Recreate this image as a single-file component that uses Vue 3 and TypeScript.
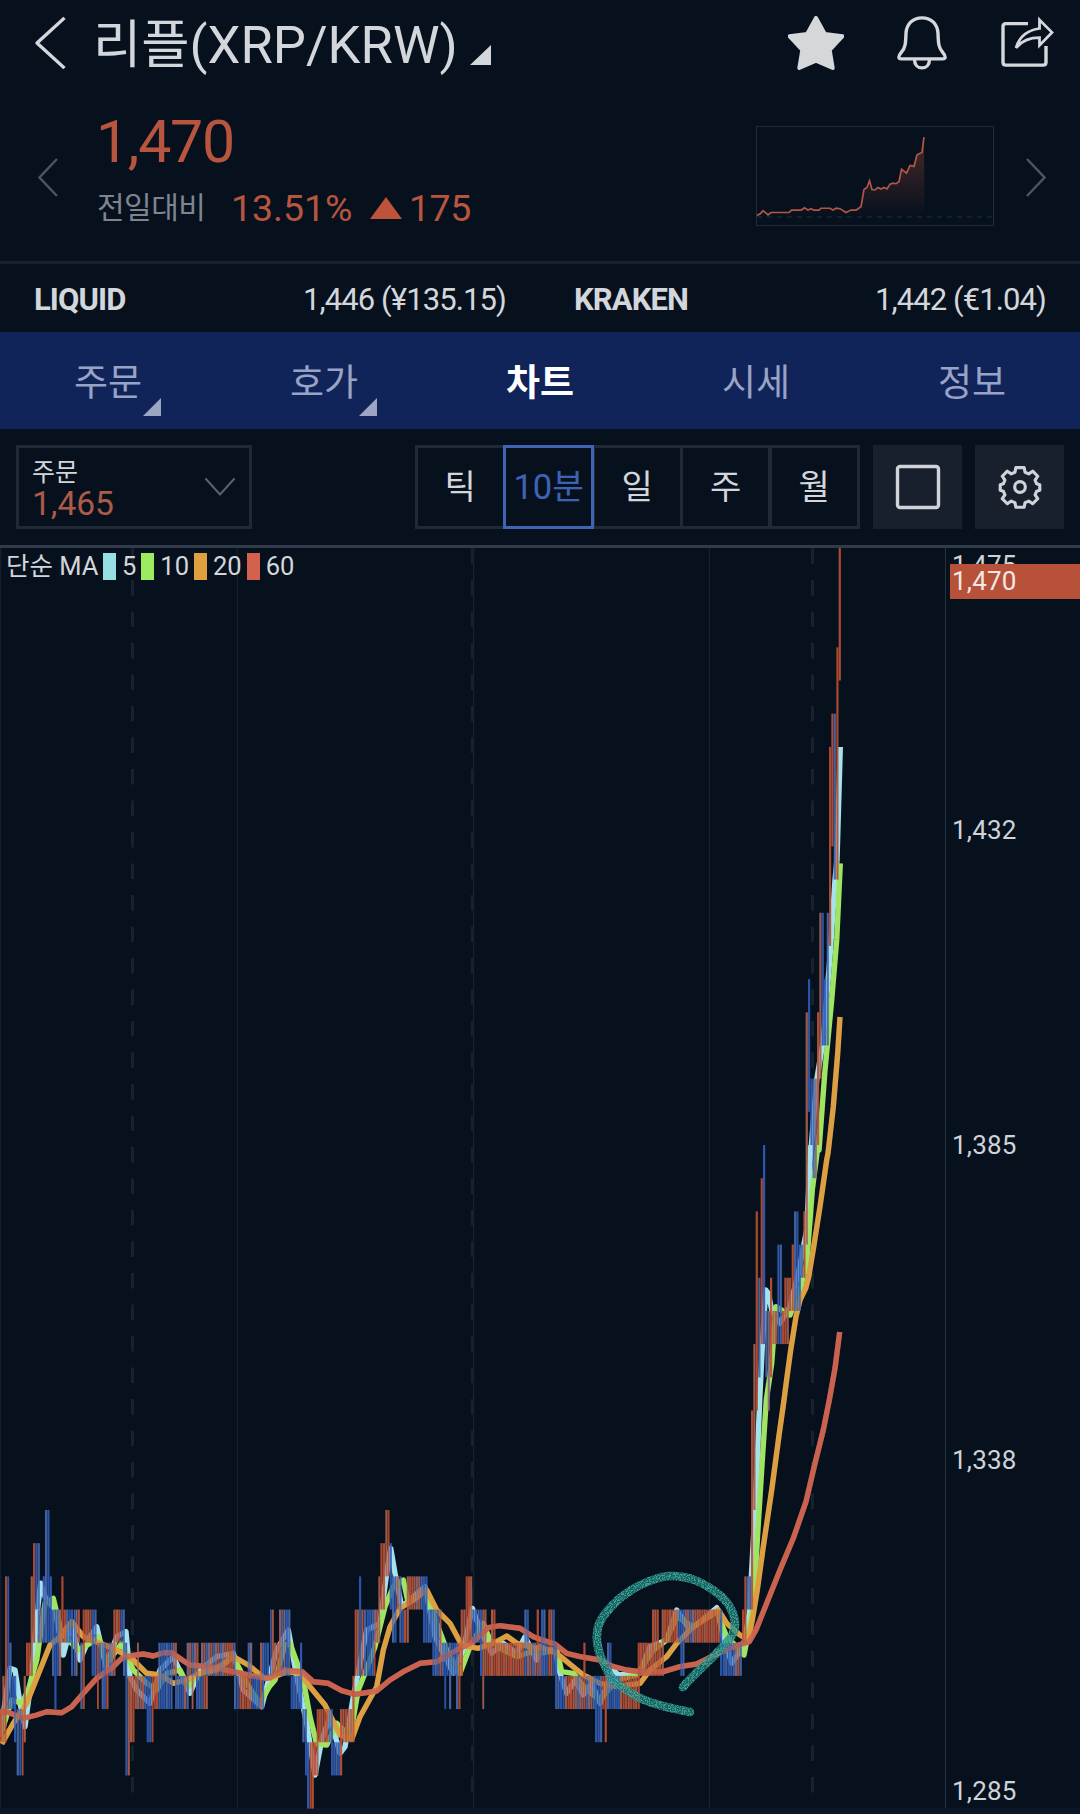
<script setup lang="ts">
type Tone = 'r' | 'b' | 'm'
type Run = [number, number, number, number, Tone]

interface Bar {
  x: number
  y: number
  w: number
  h: number
  fill: string
}

const tabs = [
  { label: '주문', more: true, active: false },
  { label: '호가', more: true, active: false },
  { label: '차트', more: false, active: true },
  { label: '시세', more: false, active: false },
  { label: '정보', more: false, active: false },
]
const periods = ['틱', '10분', '일', '주', '월']
const activePeriod = '10분'
const legend = [
  { n: '5', color: '#96dfe3' },
  { n: '10', color: '#9cea60' },
  { n: '20', color: '#dfa040' },
  { n: '60', color: '#d4614b' },
]
const axis = [
  { t: '1,475', y: 574 },
  { t: '1,432', y: 839 },
  { t: '1,385', y: 1154 },
  { t: '1,338', y: 1469 },
  { t: '1,285', y: 1800 },
]
const gridSolid = [0.7, 237.3, 473.6, 709.4]
const gridDashed = [132.5, 472.3, 812.5]

/* Candle runs: start, end (thirds of a pixel from the origin), high level, low level, tone */
const runs: { ox: number; list: Run[] }[] = [
  {
    ox: 0,
    list: [
      [0, 7, 6, 7, 'r'], [7, 20, 5, 7, 'r'], [15, 22, 2, 6, 'r'], [22, 28, 2, 6, 'b'], [28, 35, 4, 6, 'b'],
      [35, 44, 5, 6, 'b'], [42, 50, 5, 7, 'b'], [50, 66, 6, 8, 'b'], [66, 71, 6, 8, 'r'], [71, 78, 5, 7, 'r'],
      [78, 92, 4, 5, 'r'], [92, 99, 2, 5, 'r'], [99, 106, 1, 4, 'r'], [106, 120, 1, 3, 'b'], [113, 128, 3, 4, 'm'],
      [128, 135, 2, 4, 'b'], [135, 142, 0, 4, 'm'], [142, 149, 0, 4, 'b'], [149, 156, 2, 4, 'b'],
      [156, 163, 3, 5, 'b'], [163, 170, 3, 6, 'b'], [170, 177, 3, 5, 'b'], [177, 184, 3, 5, 'r'],
      [184, 191, 2, 4, 'r'], [191, 198, 3, 4, 'r'], [198, 213, 3, 4, 'b'], [213, 222, 3, 5, 'b'],
      [222, 233, 3, 5, 'm'], [233, 240, 3, 4, 'm'], [241, 248, 4, 6, 'b'], [248, 255, 4, 6, 'r'],
      [248, 275, 3, 4, 'r'], [275, 291, 3, 5, 'b'], [291, 297, 4, 6, 'r'], [297, 305, 4, 5, 'b'],
      [305, 319, 4, 6, 'b'], [319, 326, 4, 6, 'r'], [326, 347, 4, 5, 'm'], [340, 362, 3, 4, 'r'],
      [362, 375, 3, 4, 'b'], [369, 382, 4, 5, 'b'], [376, 383, 5, 8, 'b'], [383, 390, 5, 8, 'm'],
      [390, 404, 5, 7, 'r'], [404, 440, 5, 6, 'm'], [411, 417, 4, 6, 'r'], [440, 455, 5, 7, 'b'],
      [455, 461, 5, 7, 'r'], [461, 475, 5, 6, 'r'], [475, 482, 4, 6, 'm'], [482, 512, 4, 6, 'b'],
      [512, 518, 4, 6, 'm'], [518, 531, 4, 5, 'm'], [525, 552, 5, 6, 'b'], [552, 567, 5, 6, 'm'],
      [560, 596, 4, 5, 'm'], [575, 581, 5, 6, 'r'], [588, 610, 5, 6, 'b'], [603, 680, 4, 5, 'm'],
      [610, 624, 5, 6, 'r'], [680, 700, 4, 5, 'r'], [700, 708, 4, 5, 'b'], [702, 718, 5, 6, 'b'],
      [718, 755, 5, 6, 'r'], [743, 757, 4, 5, 'm'], [755, 780, 5, 6, 'b'], [780, 793, 4, 6, 'm'],
      [793, 808, 4, 5, 'b'],
    ],
  },
  {
    ox: 270,
    list: [
      [0, 5, 3, 5, 'b'], [5, 12, 3, 5, 'm'], [12, 27, 4, 5, 'r'], [27, 47, 3, 5, 'm'], [47, 62, 3, 5, 'b'],
      [62, 90, 5, 6, 'b'], [90, 97, 4, 6, 'b'], [97, 111, 6, 7, 'b'], [105, 111, 7, 8, 'b'], [111, 119, 7, 9, 'b'],
      [119, 132, 7, 9, 'r'], [132, 146, 7, 8, 'r'], [140, 175, 6, 7, 'r'], [175, 189, 6, 7, 'b'],
      [183, 210, 7, 8, 'b'], [210, 217, 6, 8, 'r'], [217, 247, 6, 7, 'r'], [247, 254, 5, 7, 'r'],
      [254, 267, 3, 5, 'r'], [267, 274, 2, 5, 'b'], [274, 290, 3, 5, 'm'], [290, 312, 3, 5, 'b'],
      [312, 325, 3, 4, 'm'], [312, 317, 4, 5, 'r'], [325, 331, 2, 4, 'r'], [331, 346, 1, 3, 'r'],
      [346, 359, 0, 2, 'r'], [359, 366, 1, 3, 'b'], [366, 380, 2, 4, 'b'], [380, 388, 2, 3, 'm'],
      [388, 395, 2, 4, 'm'], [395, 402, 3, 4, 'b'], [402, 410, 3, 4, 'r'], [410, 417, 2, 4, 'r'],
      [417, 437, 2, 3, 'r'], [437, 459, 2, 3, 'm'], [459, 473, 2, 4, 'b'], [473, 487, 3, 4, 'b'],
      [487, 508, 3, 5, 'b'], [508, 515, 3, 5, 'm'], [515, 523, 4, 5, 'b'], [523, 529, 4, 6, 'b'],
      [529, 536, 4, 5, 'b'], [537, 544, 4, 6, 'b'], [544, 558, 4, 5, 'b'], [558, 565, 4, 6, 'b'],
      [565, 572, 4, 6, 'r'], [572, 580, 3, 5, 'r'], [580, 587, 3, 4, 'r'], [587, 607, 2, 4, 'r'],
      [607, 630, 3, 4, 'b'], [630, 637, 3, 5, 'b'], [637, 643, 3, 6, 'r'], [643, 650, 3, 5, 'r'],
      [650, 663, 4, 5, 'r'], [663, 677, 3, 5, 'r'], [677, 763, 4, 5, 'r'], [763, 777, 3, 4, 'b'],
      [763, 800, 4, 5, 'm'], [800, 807, 3, 5, 'r'], [807, 820, 4, 5, 'm'],
    ],
  },
  {
    ox: 540,
    list: [
      [0, 3, 4, 5, 'r'], [3, 17, 3, 5, 'b'], [17, 25, 4, 5, 'b'], [25, 38, 3, 5, 'r'], [38, 45, 3, 5, 'b'],
      [45, 52, 4, 6, 'b'], [52, 75, 5, 6, 'b'], [75, 105, 5, 6, 'r'], [105, 130, 5, 6, 'm'], [130, 137, 4, 6, 'r'],
      [137, 165, 5, 6, 'm'], [165, 180, 5, 7, 'b'], [180, 187, 5, 7, 'm'], [187, 194, 5, 6, 'r'],
      [194, 201, 5, 7, 'r'], [201, 215, 4, 6, 'b'], [215, 240, 5, 6, 'b'], [240, 293, 5, 6, 'r'],
      [293, 300, 4, 6, 'r'], [300, 336, 4, 5, 'r'], [336, 357, 3, 5, 'r'], [357, 365, 4, 5, 'r'],
      [365, 372, 3, 5, 'r'], [372, 415, 3, 4, 'r'], [415, 421, 3, 4, 'b'], [421, 434, 3, 5, 'b'],
      [434, 470, 3, 4, 'm'], [470, 540, 3, 4, 'r'], [540, 548, 3, 5, 'b'], [548, 578, 4, 5, 'b'],
      [578, 606, 4, 5, 'm'], [606, 613, 3, 4, 'r'], [613, 620, 2, 4, 'r'], [620, 635, 2, 3, 'b'],
    ],
  },
  {
    ox: 700,
    list: [
      [153, 160, -3, 3, 'r'], [160, 167, -5, 0, 'r'], [167, 175, -9, -3, 'r'], [175, 182, -7, -4, 'b'],
      [182, 189, -10, -5, 'r'], [189, 196, -11, -5, 'b'], [196, 203, -6, -4, 'b'], [203, 210, -6, -3, 'm'],
      [210, 217, -7, -4, 'r'], [217, 232, -6, -5, 'r'], [232, 240, -8, -5, 'b'], [240, 246, -8, -5, 'm'],
      [246, 253, -6, -5, 'r'], [253, 267, -7, -5, 'r'], [267, 275, -7, -6, 'r'], [275, 282, -8, -6, 'r'],
      [282, 289, -9, -6, 'm'], [289, 296, -9, -6, 'b'], [296, 303, -8, -6, 'b'], [303, 310, -8, -7, 'b'],
      [310, 317, -9, -7, 'r'],
    ],
  },
  {
    ox: 740,
    list: [
      [197, 204, -15, -8, 'r'], [204, 211, -16, -12, 'b'], [211, 218, -13, -11, 'b'], [218, 225, -13, -10, 'b'],
      [225, 231, -13, -10, 'm'], [231, 238, -15, -11, 'r'], [238, 245, -18, -13, 'r'], [245, 252, -18, -14, 'b'],
      [252, 260, -16, -14, 'b'], [260, 267, -18, -14, 'm'], [267, 274, -23, -17, 'r'], [274, 281, -24, -20, 'r'],
      [281, 289, -24, -19, 'm'], [289, 296, -26, -19, 'r'], [296, 303, -29, -25, 'r'],
    ],
  },
]

const palette: Record<Tone, string[]> = {
  r: ['#bf5035', '#a9614f', '#b84c31'],
  b: ['#305dba', '#4a69a8', '#2f5ab0'],
  m: ['#ae5b49', '#4767aa', '#85697f'],
}
const levelY = (level: number) => 1510 + level * 33.18

const bars: Bar[] = []
for (const part of runs) {
  for (const [from, to, high, low, tone] of part.list) {
    const x0 = part.ox + from / 3
    const width = (to - from) / 3
    const count = Math.max(1, Math.round(width / 2.36))
    const pitch = width / count
    for (let i = 0; i < count; i++) {
      bars.push({
        x: x0 + i * pitch,
        y: levelY(high),
        w: Math.min(pitch - 0.15, 2.25),
        h: (low - high) * 33.18,
        fill: palette[tone][(i + Math.floor(from / 7)) % 3],
      })
    }
  }
}

type Piece = [number, number, number[]]
function line(pieces: Piece[]): string {
  return pieces
    .flatMap(([ox, oy, p]) => {
      const out: string[] = []
      for (let i = 0; i < p.length; i += 2) out.push(`${(ox + p[i] / 3).toFixed(1)},${(oy + p[i + 1] / 3).toFixed(1)}`)
      return out
    })
    .join(' ')
}

const averages = [
  {
    color: '#a5e2ee',
    points: line([
      [0, 1490, [0, 740, 30, 535, 45, 540, 60, 640, 75, 710, 95, 560, 110, 380, 122, 280, 135, 320, 165, 360, 190, 495, 215, 400, 240, 510, 270, 440, 290, 410, 318, 530, 350, 440, 378, 425, 390, 560, 410, 600, 450, 640, 480, 540, 520, 500, 570, 610, 600, 540, 650, 500, 700, 490, 730, 600, 785, 650, 808, 560]],
      [270, 1490, [20, 480, 55, 420, 80, 560, 110, 700, 135, 855, 155, 750, 180, 680, 210, 790, 225, 770, 250, 620, 290, 420, 330, 400, 350, 250, 362, 175, 375, 250, 395, 350, 430, 320, 465, 290, 495, 440, 550, 550, 580, 480, 607, 355, 635, 430, 665, 490, 700, 460, 740, 490, 765, 440, 800, 510]],
      [540, 1540, [0, 330, 45, 330, 60, 400, 80, 460, 105, 420, 130, 465, 155, 430, 180, 490, 220, 390, 235, 405, 300, 400, 330, 320, 380, 300, 410, 210, 450, 270, 530, 203, 550, 290, 575, 370, 610, 320]],
      [700, 1400, [148, 640, 161, 400, 172, 180, 179, 0]],
      [700, 1130, [187, 650, 197, 480, 205, 490, 215, 540, 240, 580, 270, 530, 295, 430, 320, 300, 332, 50]],
      [740, 840, [212, 940, 230, 720, 250, 600, 270, 350, 285, 120]],
      [740, 540, [291, 960, 301, 621]],
    ]),
  },
  {
    color: '#9fe562',
    points: line([
      [0, 1490, [0, 740, 35, 630, 65, 640, 85, 600, 110, 510, 135, 340, 160, 325, 185, 430, 235, 480, 270, 460, 295, 440, 320, 520, 365, 460, 400, 540, 440, 580, 470, 600, 500, 550, 540, 540, 565, 590, 600, 550, 650, 540, 700, 500, 740, 580, 780, 640, 808, 590]],
      [270, 1490, [15, 570, 45, 465, 60, 460, 100, 570, 120, 680, 140, 762, 170, 765, 200, 700, 240, 740, 265, 600, 285, 550, 315, 470, 345, 350, 370, 290, 400, 270, 415, 340, 465, 300, 500, 400, 530, 480, 570, 550, 600, 470, 640, 400, 660, 450, 700, 480, 740, 500, 800, 480]],
      [540, 1540, [0, 340, 50, 330, 65, 395, 100, 400, 140, 450, 180, 480, 230, 420, 290, 405, 340, 330, 380, 300, 410, 230, 460, 260, 530, 215, 560, 290, 580, 310, 612, 345]],
      [700, 1400, [145, 700, 162, 600, 173, 400, 187, 180, 199, 0]],
      [700, 1130, [215, 700, 228, 530, 270, 555, 300, 480, 320, 400, 337, 180, 360, 0]],
      [740, 840, [237, 930, 255, 690, 275, 480, 290, 300, 301, 70]],
    ]),
  },
  {
    color: '#dda043',
    points: line([
      [0, 1490, [5, 762, 40, 700, 80, 640, 100, 590, 150, 465, 180, 440, 215, 395, 250, 440, 300, 460, 350, 480, 400, 510, 440, 550, 480, 555, 520, 580, 560, 570, 600, 550, 650, 535, 700, 500, 745, 525, 790, 562]],
      [270, 1490, [0, 565, 50, 545, 90, 550, 120, 590, 165, 645, 210, 735, 245, 748, 270, 680, 320, 590, 340, 480, 360, 410, 390, 355, 430, 330, 470, 300, 500, 360, 540, 400, 575, 465, 625, 475, 680, 455, 710, 438, 740, 460, 800, 475]],
      [540, 1540, [0, 320, 50, 340, 130, 405, 180, 430, 230, 440, 300, 430, 330, 390, 380, 350, 410, 310, 460, 260, 535, 210, 560, 250, 600, 285, 625, 300]],
      [700, 1400, [157, 660, 172, 570, 190, 440, 215, 270, 238, 100, 252, 0]],
      [700, 1130, [261, 741, 272, 660, 288, 560, 300, 510, 317, 475, 326, 440, 341, 350, 360, 230, 380, 90]],
      [740, 840, [264, 940, 280, 800, 293, 640, 300, 531]],
    ]),
  },
  {
    color: '#c96350',
    points: line([
      [0, 1490, [0, 665, 20, 665, 70, 685, 110, 675, 140, 665, 185, 668, 215, 650, 250, 610, 290, 565, 340, 530, 365, 505, 395, 497, 430, 492, 460, 498, 490, 488, 515, 488, 550, 512, 570, 525, 640, 532, 700, 545, 760, 558, 800, 565]],
      [270, 1490, [0, 562, 45, 540, 65, 543, 97, 545, 130, 575, 175, 580, 215, 602, 255, 613, 320, 603, 360, 570, 400, 545, 450, 520, 500, 515, 560, 480, 610, 455, 655, 413, 690, 407, 750, 415, 790, 440]],
      [540, 1540, [0, 298, 45, 312, 80, 340, 120, 350, 180, 360, 215, 378, 260, 390, 300, 395, 370, 395, 420, 380, 470, 372, 510, 352, 560, 328, 605, 312, 628, 305]],
      [700, 1400, [168, 690, 200, 610, 240, 510, 280, 415, 318, 305, 345, 190, 370, 90]],
      [700, 1130, [388, 810, 405, 715, 419, 606]],
    ]),
  },
]

const circle =
  'M683 1687C697 1670 714 1658 727 1642C737 1632 737 1620 730 1607C724 1597 712 1588 697 1581C688 1577 680 1576 670 1576C660 1576 640 1584 630 1591C620 1597 602 1613 598 1627C594 1645 601 1658 607 1670C612 1682 620 1686 634 1695C650 1704 670 1708 690 1712'

const spark = '217,223 220.5,221 223,218 226,220.5 228,222.5 231,220 249,220 251.5,217.5 261,217.5 264.5,215 268,217.5 271,216 274,217.5 279,217.5 281,215.5 290,215.5 293,217.5 296,215.5 300,216 306,220 311,217.5 316,217.5 321,214 324,196 327,194 329.5,187 332,196 335,196.5 338,194 341,195.5 344,194 347,195.5 350,190.5 353,189.5 356,190 359,188 361.5,175 366.5,179 370,171 374,172 377,160 382,157.5 384,141.5'
</script>

<template>
  <main class="app">
    <header class="top">
      <svg class="back" width="34" height="58" viewBox="34 14 34 60" preserveAspectRatio="none"><path d="M64.500 18 37 44l27.500 26" /></svg>
      <h1 class="title">리플(XRP/KRW)</h1>
      <i class="corner"></i>
      <div class="actions">
        <svg width="56" height="54" viewBox="788.5 16 56 56" preserveAspectRatio="none">
          <path class="solid" d="M816.500 18l8.800 16.500 17.700 2.500-12.800 14.300 3 18.700-16.700-7.500-16.700 7.500 3-18.700-12.800-14.300 17.700-2.500z" />
        </svg>
        <svg width="50" height="54" viewBox="896.500 16 50 56" preserveAspectRatio="none">
          <path d="M921.500 18c-9.500 0-15.500 6.500-16 16-.4 9-.2 14.500-4.500 19.500-2.500 3-3 4.500-2.500 6 .3.700 1 .9 2 .9h42c1 0 1.700-.2 2-.9.500-1.500 0-3-2.500-6-4.300-5-4.100-10.500-4.500-19.500-.5-9.500-6.500-16-16-16zM914 61c0 5.500 3.300 8.800 7.500 8.800s7.500-3.300 7.500-8.800" />
        </svg>
        <svg width="54" height="54" viewBox="1000 16 54 56" preserveAspectRatio="none">
          <path d="M1028 24h-22q-3 0-3 3v37q0 3 3 3h37q3 0 3-3v-17" />
          <path class="thin" d="M1039.500 20v9c-11 1.500-20 8-23.500 20 6-7.500 13-10.500 23.500-10.500v8l12.500-13.500z" />
        </svg>
      </div>
    </header>

    <section class="quote">
      <svg class="nav" width="20" height="40" viewBox="38 163 20 40"><path d="M57 165 39.500 183.500 57 202" /></svg>
      <div class="figures">
        <div class="price">1,470</div>
        <div class="change">
          <span class="label">전일대비</span>
          <span class="pct">13.51%</span>
          <i class="up"></i>
          <span class="diff">175</span>
        </div>
      </div>
      <svg class="spark" width="238" height="100" viewBox="216 130 238 104" preserveAspectRatio="none">
        <defs>
          <linearGradient id="glow" x1="0" y1="0" x2="0" y2="1">
            <stop offset="0" stop-color="#b8513a" stop-opacity=".38" />
            <stop offset="1" stop-color="#b8513a" stop-opacity="0" />
          </linearGradient>
        </defs>
        <rect x="216.500" y="130.500" width="237" height="103" fill="none" stroke="#222b38" />
        <polygon :points="spark + ' 384.500,222 217,222'" fill="url(#glow)" />
        <path d="M217 224.600h236" stroke="#1d3140" stroke-dasharray="5 5" />
        <polyline :points="spark" fill="none" stroke="#b25745" stroke-width="1.700" />
      </svg>
      <svg class="nav next" width="20" height="40" viewBox="1026 163 20 40"><path d="M1027 165 1044.500 183.500 1027 202" /></svg>
    </section>

    <section class="exchanges">
      <div class="exchange"><b>LIQUID</b><span>1,446 (¥135.15)</span></div>
      <div class="exchange"><b>KRAKEN</b><span>1,442 (€1.04)</span></div>
    </section>

    <nav class="tabs">
      <div v-for="t in tabs" :key="t.label" class="tab" :class="{ active: t.active }">
        {{ t.label }}<i v-if="t.more" class="more"></i>
      </div>
    </nav>

    <section class="tools">
      <div class="select">
        <div><div class="kind">주문</div><div class="value">1,465</div></div>
        <svg width="32" height="20" viewBox="0 0 32 20"><path d="M1.500 1.500 16 17.500 30.500 1.500" /></svg>
      </div>
      <div class="periods">
        <div v-for="p in periods" :key="p" class="period" :class="{ on: p === activePeriod }">{{ p }}</div>
      </div>
      <div class="button">
        <svg width="46" height="46" viewBox="0 0 46 46"><rect x="2.500" y="2.500" width="41" height="41" rx="2.500" /></svg>
      </div>
      <div class="button">
        <svg width="46" height="46" viewBox="-25 -25 50 50">
          <path
            d="M-4.500-20.500h9l1 5 4 1.700 4.300-2.900 5.500 5.500-2.900 4.200 1.700 4 3.400 1v6l-3.400 1-1.700 4 2.900 4.200-5.500 5.500-4.300-2.900-4 1.700-1 5h-9l-1-5-4-1.700-4.300 2.900-5.500-5.500 2.900-4.200-1.700-4-3.400-1v-6l3.400-1 1.700-4-2.900-4.200 5.500-5.500 4.300 2.900 4-1.700z"
            transform="translate(0 -.5)"
          />
          <circle r="5.800" />
        </svg>
      </div>
    </section>

    <section class="chart">
      <svg width="1080" height="1266" viewBox="0 548 1080 1266">
        <defs>
          <filter id="grain" x="-5%" y="-5%" width="110%" height="110%">
            <feTurbulence type="fractalNoise" baseFrequency=".85" numOctaves="2" seed="4" result="noise" />
            <feColorMatrix in="noise" type="matrix" values="0 0 0 0 0  0 0 0 0 0  0 0 0 0 0  0 0 0 8 -3.800" result="mask" />
            <feComposite in="SourceGraphic" in2="mask" operator="in" />
          </filter>
        </defs>
        <rect x="0" y="1807.700" width="1080" height="7" fill="#0d1628" />
        <path v-for="x in gridSolid" :key="'s' + x" :d="`M${x} 548V1808`" stroke="#18212e" stroke-width="1.200" />
        <path v-for="x in gridDashed" :key="'d' + x" :d="`M${x} 548.500V1793`" stroke="#18212e" stroke-width="3" stroke-dasharray="15.500 16" />
        <path d="M945.500 548V1808" stroke="#27323f" />
        <polyline v-for="a in averages" :key="a.color" :points="a.points" :stroke="a.color" class="average" />
        <g opacity=".92">
          <rect v-for="(b, i) in bars" :key="i" :x="b.x" :y="b.y" :width="b.w" :height="b.h" :fill="b.fill" />
        </g>
        <polyline :points="averages[3].points" :stroke="averages[3].color" class="average veil" />
        <polyline :points="averages[2].points" :stroke="averages[2].color" class="average veil faint" />
        <path class="ink" :d="circle" />
        <path class="ink grains" filter="url(#grain)" :d="circle" />
        <text v-for="a in axis" :key="a.t" x="952" :y="a.y" class="tick">{{ a.t }}</text>
        <rect x="950" y="564" width="130" height="35" fill="#b8513a" />
        <text x="952" y="590" class="tick last">1,470</text>
      </svg>
      <div class="legend">
        <span class="name">단순 MA</span>
        <span v-for="l in legend" :key="l.n" class="entry"><i :style="{ background: l.color }"></i>{{ l.n }}</span>
      </div>
    </section>
  </main>
</template>

<style>
body {
  margin: 0;
  background: #07111e;
}
</style>

<style scoped>
.app {
  width: 1080px;
  height: 1814px;
  overflow: hidden;
  background: #07111e;
  color: #d3d6da;
  font-family: Roboto, 'Noto Sans CJK KR', sans-serif;
}
svg {
  display: block;
  flex: none;
}
i {
  display: block;
}
.top {
  display: flex;
  height: 88px;
  align-items: center;
}
.top svg {
  margin-bottom: 3px;
  fill: none;
  stroke: #d5d7da;
  stroke-width: 3.4;
  stroke-linejoin: round;
}
.top svg .solid {
  fill: #d5d7d9;
  stroke-width: 4;
}
.top svg .thin {
  stroke-width: 2.8;
  stroke-linejoin: miter;
}
.top .back {
  margin-left: 34px;
}
.title {
  width: 361px;
  margin: 2px 0 0 25px;
  font-size: 52.5px;
  line-height: 80px;
  font-weight: 400;
  white-space: nowrap;
}
.corner {
  width: 21px;
  height: 20px;
  margin: 22px 0 0 16px;
  background: #d3d6da;
  clip-path: polygon(100% 0, 100% 100%, 0 100%);
}
.actions {
  display: flex;
  gap: 53px;
  margin: 0 26px 0 auto;
}
.quote {
  display: flex;
  height: 173px;
  border-bottom: 3px solid #18212e;
}
.nav {
  margin: 69px 0 0 38px;
  fill: none;
  stroke: #4c5563;
  stroke-width: 2.4;
}
.figures {
  width: 660px;
  margin-left: 38px;
}
.price {
  height: 88px;
  margin-top: 10px;
  font-size: 59px;
  line-height: 88px;
  letter-spacing: -1.3px;
  color: #b8553f;
}
.change {
  display: flex;
  height: 40px;
  margin-top: 2px;
  font-size: 37.4px;
  line-height: 40px;
  color: #b8553f;
}
.label {
  width: 134px;
  margin-left: 1px;
  font-size: 30px;
  letter-spacing: -0.5px;
  color: #7e8590;
}
.pct {
  width: 136px;
}
.up {
  width: 32px;
  height: 22px;
  margin: 9px 7px 0 3px;
  background: #bd5338;
  clip-path: polygon(50% 0, 100% 100%, 0 100%);
}
.diff {
  letter-spacing: -0.4px;
}
.spark {
  margin-top: 38px;
}
.next {
  margin-left: 32px;
}
.exchanges {
  display: flex;
  height: 68px;
}
.exchange {
  display: flex;
  width: 540px;
  box-sizing: border-box;
  padding: 1px 34px 0 34px;
  justify-content: space-between;
  font-size: 31px;
  line-height: 69px;
  letter-spacing: -0.9px;
}
.tabs {
  display: flex;
  height: 97px;
  background: #112459;
}
.tab {
  position: relative;
  width: 216px;
  text-align: center;
  font-size: 37px;
  line-height: 103px;
  color: #98a3c5;
}
.tab.active {
  color: #fff;
  font-weight: 700;
}
.more {
  position: absolute;
  left: 143px;
  top: 66px;
  width: 18px;
  height: 18px;
  background: #9ca6c4;
  clip-path: polygon(100% 0, 100% 100%, 0 100%);
}
.tools {
  display: flex;
  height: 119px;
  box-sizing: border-box;
  padding: 16px 16px 0;
  border-bottom: 3px solid #323b49;
}
.select {
  display: flex;
  box-sizing: border-box;
  width: 236px;
  height: 84px;
  padding: 0 13px;
  border: 3px solid #202935;
  justify-content: space-between;
}
.select svg {
  margin: 29px 0 0;
  fill: none;
  stroke: #596270;
  stroke-width: 2;
}
.kind {
  padding-top: 9px;
  font-size: 25px;
  line-height: 31px;
}
.value {
  font-size: 33.500px;
  line-height: 32px;
  color: #ad5a49;
}
.periods {
  display: flex;
  margin-left: 163px;
}
.period {
  box-sizing: border-box;
  width: 91px;
  height: 84px;
  margin-right: -2.500px;
  border: 3px solid #202935;
  text-align: center;
  font-size: 34px;
  line-height: 79px;
}
.period.on {
  position: relative;
  border-color: #3f64b4;
  color: #3e63b4;
  font-size: 34.500px;
}
.button {
  display: flex;
  width: 89px;
  height: 84px;
  margin-left: 13px;
  align-items: center;
  justify-content: center;
  background: #18202e;
}
.periods + .button {
  margin-left: 16px;
}
.button svg {
  fill: none;
  stroke: #d0d3d8;
  stroke-width: 3.4;
  stroke-linejoin: round;
}
.chart {
  position: relative;
}
.average {
  fill: none;
  stroke-width: 5.4;
  stroke-linejoin: round;
}
.veil {
  opacity: 0.45;
}
.veil.faint {
  opacity: 0.2;
}
.ink {
  fill: none;
  stroke: #1f7f7a;
  stroke-width: 8.500;
  stroke-linecap: round;
  opacity: 0.75;
}
.ink.grains {
  stroke: #4fb5a8;
  opacity: 0.75;
}
.tick {
  font-size: 26px;
  letter-spacing: 0.2px;
  fill: #cfd3d8;
}
.tick.last {
  fill: #f3e9e4;
}
.legend {
  position: absolute;
  left: 6px;
  top: 5px;
  display: flex;
  height: 27px;
  font-size: 25.500px;
  line-height: 27px;
}
.name {
  width: 92px;
  white-space: nowrap;
}
.entry {
  display: flex;
  gap: 6px;
  margin-left: 5px;
}
.entry i {
  width: 13px;
  height: 27px;
}
</style>
